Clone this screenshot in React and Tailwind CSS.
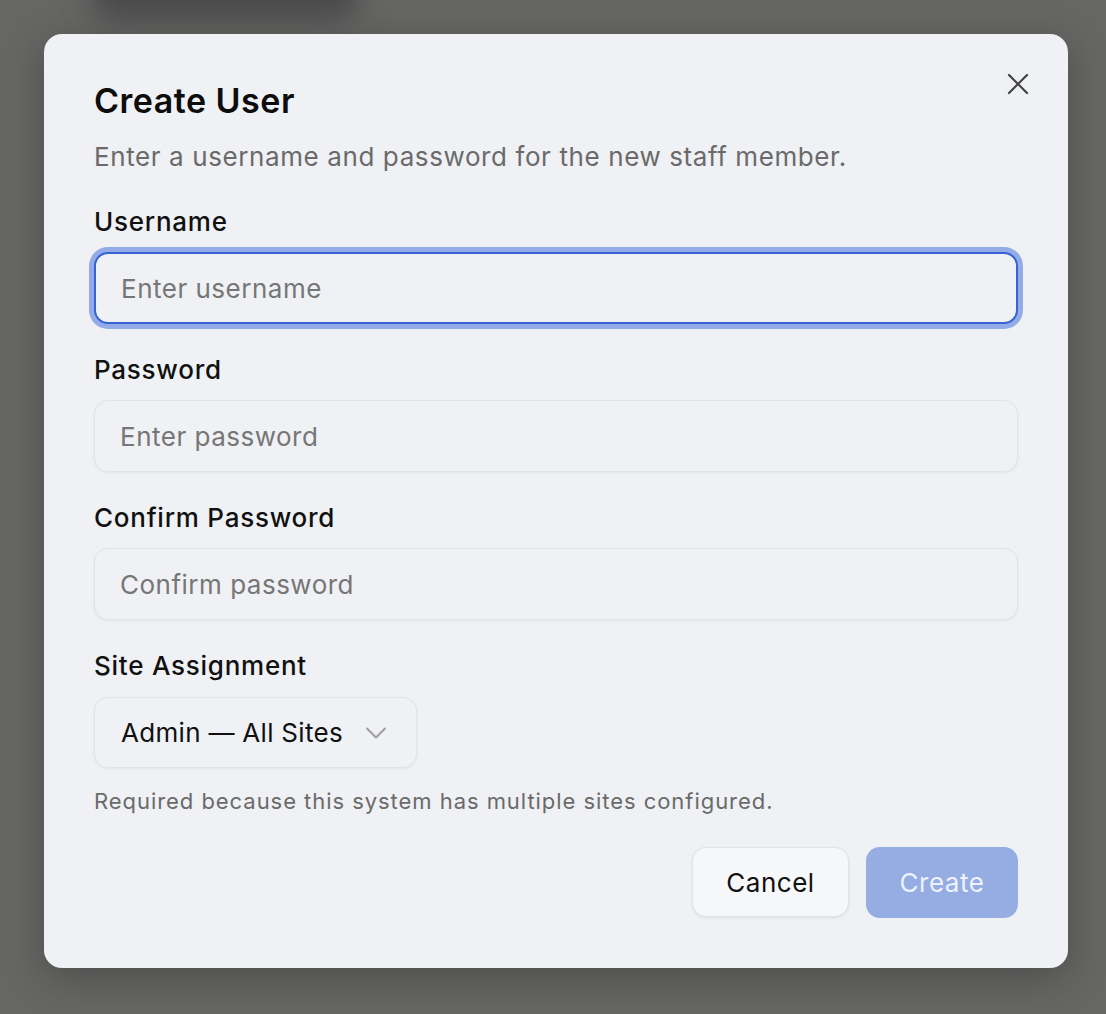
import { X, ChevronDown } from "lucide-react";

const font = { fontFamily: "Inter, 'Noto Sans', sans-serif" };

const Field = ({ label, placeholder, focused, type = "text" }) => (
  <div className="flex flex-col">
    <label className="text-[26px] leading-[34px] font-medium tracking-[0.75px] text-[#111]">{label}</label>
    <input
      type={type}
      placeholder={placeholder}
      autoFocus={focused}
      className={
        "mt-[13px] h-[72px] w-full rounded-[14px] px-[25px] text-[26px] tracking-[0.5px] bg-[#eff1f4] text-[#111] placeholder:text-[#767676] caret-[#999] outline-none " +
        (focused
          ? "border-2 border-[#3563d4] ring-[5px] ring-[#93abe6]"
          : "border border-[#e2e3e6] shadow-[0_1px_3px_rgba(0,0,0,0.06)]")
      }
    />
  </div>
);

const App = () => {
  return (
    <div className="relative min-h-[1014px] w-full bg-[#666665] overflow-hidden pt-[34px]" style={font}>
      <div className="absolute left-[90px] top-[-30px] h-[50px] w-[270px] rounded-full bg-[#4a4a4a] blur-[14px]"></div>
      <div className="relative ml-[44px] w-[1024px] h-[934px] rounded-[18px] bg-[#eff1f4] shadow-[0_10px_40px_rgba(0,0,0,0.25)] px-[50px] pt-[47px]">
        <button className="absolute right-[32px] top-[32px] text-[#444]">
          <X size={36} strokeWidth={1.5} />
        </button>
        <h2 className="text-[34px] leading-[40px] font-semibold text-[#0d0d0d] tracking-[0.5px]">Create User</h2>
        <p className="mt-[19px] text-[26px] leading-[34px] tracking-[0.6px] text-[#6a6a6a]">
          Enter a username and password for the new staff member.
        </p>
        <div className="mt-[31px] flex flex-col gap-[29px]">
          <Field label="Username" placeholder="Enter username" focused />
          <Field label="Password" placeholder="Enter password" type="password" />
          <Field label="Confirm Password" placeholder="Confirm password" type="password" />
          <div className="flex flex-col">
            <label className="text-[26px] leading-[34px] font-medium tracking-[0.75px] text-[#111]">Site Assignment</label>
            <button className="mt-[14px] h-[71px] w-[323px] rounded-[14px] border border-[#e2e3e6] bg-[#eff1f4] shadow-[0_1px_3px_rgba(0,0,0,0.06)] flex items-center justify-between pl-[26px] pr-[22px]">
              <span className="text-[26px] tracking-[0.3px] text-[#111]">Admin — All Sites</span>
              <ChevronDown size={36} strokeWidth={1.4} className="text-[#a0a0a0]" />
            </button>
            <p className="mt-[18px] text-[22px] leading-[30px] tracking-[0.95px] text-[#6a6a6a]">
              Required because this system has multiple sites configured.
            </p>
          </div>
        </div>
        <div className="mt-[31px] flex justify-end gap-[17px]">
          <button className="h-[70px] w-[157px] rounded-[14px] border border-[#e2e3e6] bg-[#f6f7f9] shadow-[0_1px_3px_rgba(0,0,0,0.08)] text-[26px] tracking-[0.5px] text-[#111]">
            Cancel
          </button>
          <button className="h-[71px] w-[152px] rounded-[14px] bg-[#95ade2] text-[26px] tracking-[0.5px] text-[#eef2fb]">
            Create
          </button>
        </div>
      </div>
    </div>
  );
};

export default App;
